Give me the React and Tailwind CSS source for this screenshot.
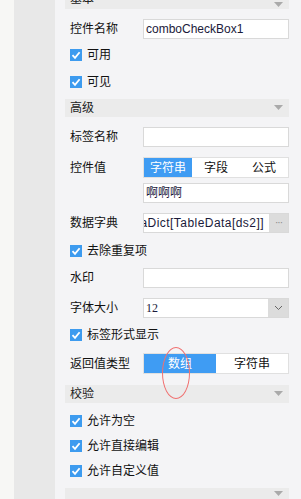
import React from 'react';

const font = { fontFamily: '"Liberation Sans", "Noto Sans CJK SC", sans-serif' };

function Header({ title, className = '' }) {
  return (
    <div className={`h-[20px] bg-[#ebebeb] flex items-center justify-between pl-[5px] pr-[6px] ${className}`}>
      <span className="text-[12px] text-[#222]">{title}</span>
      <svg width="9" height="6" viewBox="0 0 9 6"><path d="M0 0h9L4.5 5z" fill="#aaa" /></svg>
    </div>
  );
}

function Check({ label, className = '' }) {
  return (
    <div className={`h-[12px] flex items-center pl-[5px] gap-[5px] ${className}`}>
      <span className="w-[12px] h-[12px] bg-[#3d9bef] flex items-center justify-center">
        <svg width="10" height="10" viewBox="0 0 10 10">
          <path d="M1.5 5.2 4 7.8 8.6 2.2" stroke="#fff" strokeWidth="1.8" fill="none" />
        </svg>
      </span>
      <span className="text-[12px] text-[#111] leading-none">{label}</span>
    </div>
  );
}

function Row({ label, children, className = '' }) {
  return (
    <div className={`flex items-center pl-[5px] ${className}`}>
      <span className="w-[73px] text-[12px] text-[#111] shrink-0">{label}</span>
      <div className="flex-1 min-w-0">{children}</div>
    </div>
  );
}

function Input({ children }) {
  return (
    <div className="h-[20px] bg-white border border-[#d9d9d9] flex items-center px-[2px] text-[12px] text-[#1a1a3a] whitespace-nowrap overflow-hidden">
      {children}
    </div>
  );
}

export default function App() {
  return (
    <div className="relative w-[301px] h-[499px] overflow-hidden flex" style={font}>
      <div className="w-[14px] shrink-0 bg-[#f7f7f5]" />
      <div className="w-[41px] shrink-0 bg-[#e8e8e8]" />
      <div className="flex-1 min-w-0 bg-[#f4f4f6] pl-[10px] pr-[12px] flex flex-col">
        <Header title="基本" className="mt-[-10px] items-end pb-[1px]" />
        <Row label="控件名称" className="mt-[10px]">
          <Input>comboCheckBox1</Input>
        </Row>
        <Check label="可用" className="mt-[10px]" />
        <Check label="可见" className="mt-[15px]" />
        <Header title="高级" className="mt-[11px]" />
        <Row label="标签名称" className="mt-[10px]">
          <Input />
        </Row>
        <Row label="控件值" className="mt-[10px]">
          <div className="h-[21px] bg-white border border-[#e0e0e0] flex text-[12px]">
            <span className="w-[48px] bg-[#3f9cf3] text-white flex items-center justify-center">字符串</span>
            <span className="w-[48px] flex items-center justify-center text-[#111]">字段</span>
            <span className="w-[48px] flex items-center justify-center text-[#111]">公式</span>
          </div>
        </Row>
        <div className="mt-[5px] pl-[78px]">
          <Input>啊啊啊</Input>
        </div>
        <Row label="数据字典" className="mt-[10px]">
          <div className="h-[20px] bg-white border border-[#d9d9d9] flex">
            <div className="flex-1 min-w-0 overflow-hidden flex justify-end items-center pr-[5px] text-[12px] text-[#1a1a3a] whitespace-nowrap tracking-[0.45px]">
              <span className="shrink-0">DataDict[TableData[ds2]]</span>
            </div>
            <div className="w-[19px] shrink-0 bg-[#dcdcdc] flex items-center justify-center text-[#888] text-[10px] leading-none tracking-[-1px]">···</div>
          </div>
        </Row>
        <Check label="去除重复项" className="mt-[12px]" />
        <Row label="水印" className="mt-[11px]">
          <Input />
        </Row>
        <Row label="字体大小" className="mt-[10px]">
          <div className="h-[20px] bg-white border border-[#d9d9d9] flex">
            <div className="flex-1 flex items-center px-[2px] text-[12px] text-[#1a1a3a]" style={{ fontFamily: '"Liberation Serif", serif' }}>12</div>
            <div className="w-[20px] bg-[#dcdcdc] flex items-center justify-center">
              <svg width="9" height="6" viewBox="0 0 9 6"><path d="M1 1l3.5 3.5L8 1" stroke="#666" strokeWidth="1" fill="none" /></svg>
            </div>
          </div>
        </Row>
        <Check label="标签形式显示" className="mt-[11px]" />
        <Row label="返回值类型" className="mt-[12px]">
          <div className="h-[21px] bg-white border border-[#e0e0e0] flex text-[12px]">
            <span className="w-[72px] bg-[#3f9cf3] text-white flex items-center justify-center">数组</span>
            <span className="w-[72px] flex items-center justify-center text-[#111]">字符串</span>
          </div>
        </Row>
        <Header title="校验" className="mt-[11px]" />
        <Check label="允许为空" className="mt-[12px]" />
        <Check label="允许直接编辑" className="mt-[13px]" />
        <Check label="允许自定义值" className="mt-[13px]" />
        <Header title="" className="mt-[11px]" />
      </div>
      <div className="absolute left-[162px] top-[347px] w-[28px] h-[52px] rounded-[50%] border border-[#f07070]" />
    </div>
  );
}
